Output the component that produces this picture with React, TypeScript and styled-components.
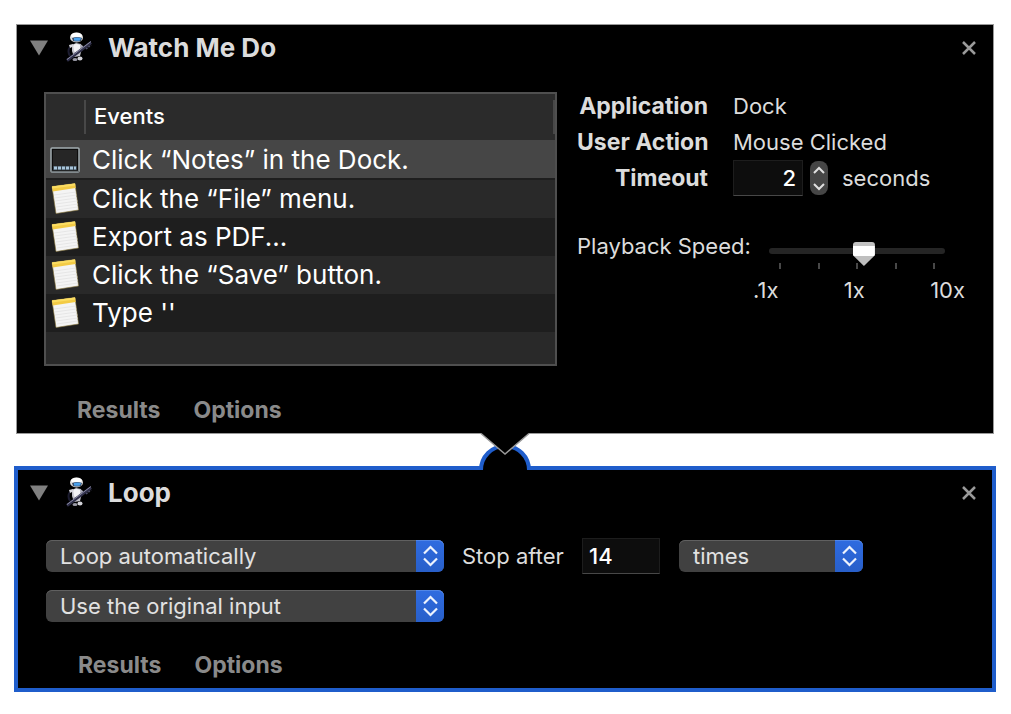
import React, { useState } from "react";
import styled, { createGlobalStyle } from "styled-components";

const GlobalStyle = createGlobalStyle`
  * { box-sizing: border-box; }
  body {
    margin: 0;
    background: #fff;
    font-family: Inter, "Liberation Sans", sans-serif;
    font-size: 22px;
    line-height: 28px;
    color: #dcdcdc;
  }
  button, input, select { font: inherit; color: inherit; }
`;

const Workflow = styled.main`
  padding: 24px 15px 22px 14px;
`;

const Panel = styled.section<{ $selected?: boolean }>`
  background: #000;
  margin: ${(p) => (p.$selected ? "0" : "0 2px")};
  border: ${(p) => (p.$selected ? "4px solid #1f5dcb" : "1px solid #999")};
`;

const Header = styled.header<{ $selected?: boolean }>`
  display: flex;
  align-items: center;
  height: 46px;
  padding: ${(p) => (p.$selected ? "0 16px 0 12px" : "0 17px 0 13px")};
`;

const IconButton = styled.button`
  display: flex;
  padding: 0;
  border: 0;
  background: none;
`;

const Title = styled.h2`
  flex: 1;
  margin: 0 0 0 14px;
  font-size: 26px;
  line-height: 32px;
  font-weight: 700;
`;

const Robot = styled.svg`
  display: block;
  margin-left: 16px;
`;

const Footer = styled.footer`
  display: flex;
  gap: 33px;
  height: 66px;
  padding: 29px 0 0 60px;
`;

const FooterButton = styled.button`
  height: 28px;
  padding: 0;
  border: 0;
  background: none;
  font-size: 23px;
  font-weight: 700;
  color: #8a8a8a;
`;

const RecorderBody = styled.div`
  display: flex;
  gap: 20px;
  padding: 21px 28px 1px 27px;
`;

const ListBox = styled.div`
  flex: 1;
  min-width: 0;
  min-height: 274px;
  border: 2px solid #4f4f4f;
  background: #292929;
`;

const EventTable = styled.table`
  width: 100%;
  border-collapse: collapse;
  table-layout: fixed;
  color: #fff;
`;

const HeadCell = styled.th<{ $icon?: boolean }>`
  width: ${(p) => (p.$icon ? "40px" : "auto")};
  height: 46px;
  padding: 0 0 2px 8px;
  text-align: left;
  font-weight: 500;
  background: linear-gradient(#484848, #484848) right 6px / 2px 34px no-repeat #2b2b2b;
  background-position: right 0 top 6px;
`;

const EventRow = styled.tr<{ $selected?: boolean }>`
  height: ${(p) => (p.$selected ? "40px" : "38px")};
  background: #292929;
  &:nth-child(odd) { background: #1e1e1e; }
  ${(p) => p.$selected && "&&:nth-child(odd) { background: linear-gradient(#464646 38px, #1e1e1e 38px); }"}
`;

const EventCell = styled.td<{ $icon?: boolean }>`
  padding: ${(p) => (p.$icon ? "0 0 0 4px" : "0 0 0 6px")};
  font-size: 26px;
  line-height: 38px;
  white-space: nowrap;
  overflow: hidden;
  svg { display: block; }
`;

const Details = styled.div`
  flex: none;
  width: 388px;
`;

const Facts = styled.div`
  display: grid;
  grid-template-columns: 131px 1fr;
  column-gap: 25px;
  row-gap: 8px;
  white-space: nowrap;
`;

const FactName = styled.label`
  height: 28px;
  text-align: right;
  font-size: 23px;
  font-weight: 700;
`;

const FactValue = styled.div`
  display: flex;
  align-items: center;
  height: 28px;
`;

const NumberBox = styled.input<{ $width: number; $align: string }>`
  flex: none;
  width: ${(p) => p.$width}px;
  height: 36px;
  padding: 0 6px;
  border: 1px solid #1d1d1d;
  border-bottom-color: #484848;
  border-radius: 0;
  background: #0d0d0d;
  color: #fff;
  font-weight: 500;
  text-align: ${(p) => p.$align};
`;

const Stepper = styled.div`
  flex: none;
  width: 18px;
  height: 34px;
  margin: 0 14px 0 7px;
  border-radius: 8px;
  background: #464646;
`;

const StepButton = styled.button`
  display: flex;
  align-items: center;
  justify-content: center;
  width: 18px;
  height: 17px;
  padding: 0;
  border: 0;
  background: none;
`;

const Speed = styled.div`
  display: grid;
  grid-template-columns: 176px 1fr;
  margin-top: 40px;
  white-space: nowrap;
`;

const SpeedScale = styled.div`
  padding-top: 7px;
`;

const Slider = styled.input`
  appearance: none;
  position: relative;
  display: block;
  width: 176px;
  height: 24px;
  margin: 0 20px 0 16px;
  background: none;
  &::-webkit-slider-runnable-track {
    height: 6px;
    border-radius: 3px;
    background: #252525;
  }
  &::-webkit-slider-thumb {
    appearance: none;
    width: 22px;
    height: 24px;
    margin-top: -6px;
    border-radius: 3px;
    background: linear-gradient(#c2c2c2 4px, #fff 4px, #fff 14px, #bfbfbf 14px);
    clip-path: polygon(0 0, 100% 0, 100% 55%, 50% 100%, 0 55%);
  }
`;

const Ticks = styled.div`
  display: flex;
  justify-content: space-between;
  margin: 0 30px 7px 26px;
`;

const Tick = styled.span`
  width: 2px;
  height: 6px;
  background: #484848;
`;

const SpeedLabels = styled.div`
  display: flex;
  justify-content: space-between;
`;

const Connector = styled.div`
  position: relative;
  height: 32px;
  svg {
    position: absolute;
    z-index: 1;
    top: -2px;
    left: 50%;
    transform: translateX(-50%);
  }
`;

const LoopBody = styled.div`
  display: flex;
  flex-direction: column;
  gap: 16px;
  padding: 22px 28px 0;
`;

const ControlRow = styled.div`
  display: flex;
  align-items: center;
  white-space: nowrap;
`;

const LoopRow = styled(ControlRow)`
  height: 36px;
`;

const StopLabel = styled.label`
  width: 120px;
  margin-left: 18px;
`;

const SelectWrap = styled.div<{ $width: number; $gap?: number }>`
  position: relative;
  flex: 0 1 ${(p) => p.$width}px;
  height: 32px;
  margin-left: ${(p) => p.$gap || 0}px;
`;

const Select = styled.select`
  appearance: none;
  width: 100%;
  height: 32px;
  padding: 0 40px 0 14px;
  border: 0;
  border-radius: 6px;
  background: #414141;
  box-shadow: inset 0 1px 0 #606060;
  color: #e2e2e2;
`;

const SelectArrows = styled.span`
  position: absolute;
  top: 0;
  right: 0;
  display: flex;
  align-items: center;
  justify-content: center;
  width: 28px;
  height: 32px;
  border-radius: 0 6px 6px 0;
  background: linear-gradient(#2f6be0, #285fc9);
  box-shadow: inset 0 1px 0 #5286e6;
  pointer-events: none;
`;

function AutomatorIcon() {
  return (
    <Robot width="28" height="32" viewBox="0 0 28 32" aria-hidden="true">
      <path d="M4 15 Q1 19 4 24" stroke="#1c1c30" strokeWidth="2" fill="none" />
      <path d="M6 13 L10 11 L15 12 L16 16 L14 24 L8 25 L6 19 Z" fill="#c4c4cc" />
      <path d="M7 13 Q10 11 14 13 L14 19 Q10 22 8 19 Z" fill="#f3f3f6" />
      <path d="M3 13 L7 12 L8 14 L4 16 Z" fill="#d6d6dc" />
      <path d="M14 12 L17 14 L17 18 L15 18 Z" fill="#aeaebb" />
      <ellipse cx="10.500" cy="5.500" rx="6.500" ry="5" fill="#dedede" />
      <ellipse cx="10.500" cy="3.500" rx="5.500" ry="2.800" fill="#fff" />
      <path d="M6 6 Q11 4 16 6 L15 9 Q11 10 7 9 Z" fill="#3a4e6c" />
      <path d="M8 6 Q11 5 15 6 L14 8.500 Q11 9 8 8.500 Z" fill="#4aa0ea" />
      <ellipse cx="9" cy="27.500" rx="2.500" ry="1.500" fill="#9c9ca8" />
      <ellipse cx="14" cy="26.500" rx="2.500" ry="2" fill="#d2d2d8" />
      <path d="M1 28.500 L25 10.500" stroke="#30304a" strokeWidth="3" />
      <path d="M1 27.500 L25 9.500" stroke="#8c8ca6" strokeWidth="1" />
      <path d="M20 17 L25 13" stroke="#4c4c66" strokeWidth="1.500" strokeDasharray="2 1" />
    </Robot>
  );
}

function NoteIcon() {
  return (
    <svg width="32" height="34" viewBox="0 0 32 34" aria-hidden="true">
      <path d="M2 4.500 L25 1.500 L28.500 28 L6 31.500 Z" fill="#f4f4f4" stroke="#8b783c" strokeWidth="0.600" />
      <path d="M2 4.500 L25 1.500 L25.700 6 L2.700 9.500 Z" fill="#f3cb45" />
      <path d="M2 4.500 L25 1.500 L25.300 3.500 L2.300 6.500 Z" fill="#fbdd62" />
      <path d="M4 13 L26 10 M4.500 16 L26.500 13 M5 19 L27 16 M5.500 22 L27.500 19 M6 25 L28 22 M6.500 28 L28 25" stroke="#e2e2e2" strokeWidth="0.800" />
    </svg>
  );
}

function DockIcon() {
  return (
    <svg width="32" height="28" viewBox="0 0 32 28" aria-hidden="true">
      <rect x="1" y="2" width="28" height="24" rx="1" fill="#0c0c0c" stroke="#a3adb1" strokeWidth="1.500" />
      <path d="M1.500 25.500 H29" stroke="#6b7275" strokeWidth="1.500" />
      <rect x="3" y="4" width="24" height="16" fill="#262626" />
      <rect x="3" y="20" width="24" height="4" fill="#384651" />
      <path d="M4 22 H26" stroke="#a9c6dc" strokeWidth="3" strokeDasharray="3 1" />
    </svg>
  );
}

function Chevrons() {
  return (
    <SelectArrows>
      <svg width="16" height="22" viewBox="0 0 16 22" aria-hidden="true">
        <path d="M2 8.500 L8.500 2 L15 8.500 M2 13.500 L8.500 20 L15 13.500" fill="none" stroke="#eef3fd" strokeWidth="2.200" />
      </svg>
    </SelectArrows>
  );
}

function PanelHeader({ title, selected }: { title: string; selected?: boolean }) {
  return (
    <Header $selected={selected}>
      <IconButton aria-label={`Collapse ${title}`}>
        <svg width="20" height="16" viewBox="0 0 20 16">
          <path d="M0 0.500 H18 L9 15.500 Z" fill="#808080" />
        </svg>
      </IconButton>
      <AutomatorIcon />
      <Title>{title}</Title>
      <IconButton aria-label={`Remove ${title}`}>
        <svg width="14" height="14" viewBox="0 0 14 14">
          <path d="M1 1 L13 13 M13 1 L1 13" stroke="#9a9a9a" strokeWidth="2.500" />
        </svg>
      </IconButton>
    </Header>
  );
}

function PanelFooter() {
  return (
    <Footer>
      <FooterButton>Results</FooterButton>
      <FooterButton>Options</FooterButton>
    </Footer>
  );
}

function Popup({ label, width, gap, options }: { label: string; width: number; gap?: number; options: string[] }) {
  return (
    <SelectWrap $width={width} $gap={gap}>
      <Select aria-label={label}>
        {options.map((o) => (
          <option key={o}>{o}</option>
        ))}
      </Select>
      <Chevrons />
    </SelectWrap>
  );
}

const events = [
  { icon: "dock", text: "Click “Notes” in the Dock." },
  { icon: "note", text: "Click the “File” menu." },
  { icon: "note", text: "Export as PDF..." },
  { icon: "note", text: "Click the “Save” button." },
  { icon: "note", text: "Type ''" },
];

export default function App() {
  const [timeout, setTimeoutValue] = useState(2);
  const [count, setCount] = useState("14");
  const [speed, setSpeed] = useState(109);

  return (
    <>
      <GlobalStyle />
      <Workflow>
        <Panel>
          <PanelHeader title="Watch Me Do" />
          <RecorderBody>
            <ListBox>
              <EventTable>
                <thead>
                  <tr>
                    <HeadCell $icon aria-label="Icon" />
                    <HeadCell>Events</HeadCell>
                  </tr>
                </thead>
                <tbody>
                  {events.map((e, i) => (
                    <EventRow key={e.text} $selected={i === 0}>
                      <EventCell $icon>{e.icon === "dock" ? <DockIcon /> : <NoteIcon />}</EventCell>
                      <EventCell>{e.text}</EventCell>
                    </EventRow>
                  ))}
                </tbody>
              </EventTable>
            </ListBox>
            <Details>
              <Facts>
                <FactName as="span">Application</FactName>
                <FactValue>Dock</FactValue>
                <FactName as="span">User Action</FactName>
                <FactValue>Mouse Clicked</FactValue>
                <FactName htmlFor="timeout">Timeout</FactName>
                <FactValue>
                  <NumberBox
                    id="timeout"
                    $width={70}
                    $align="right"
                    value={timeout}
                    onChange={(e) => setTimeoutValue(Number(e.target.value) || 0)}
                  />
                  <Stepper>
                    <StepButton aria-label="Increase" onClick={() => setTimeoutValue(timeout + 1)}>
                      <svg width="12" height="8" viewBox="0 0 12 8">
                        <path d="M1 7 L6 2 L11 7" fill="none" stroke="#e0e0e0" strokeWidth="2" />
                      </svg>
                    </StepButton>
                    <StepButton aria-label="Decrease" onClick={() => setTimeoutValue(Math.max(0, timeout - 1))}>
                      <svg width="12" height="8" viewBox="0 0 12 8">
                        <path d="M1 1 L6 6 L11 1" fill="none" stroke="#e0e0e0" strokeWidth="2" />
                      </svg>
                    </StepButton>
                  </Stepper>
                  seconds
                </FactValue>
              </Facts>
              <Speed>
                <label htmlFor="speed">Playback Speed:</label>
                <SpeedScale>
                  <Slider
                    id="speed"
                    type="range"
                    min={0}
                    max={200}
                    value={speed}
                    onChange={(e) => setSpeed(Number(e.target.value))}
                  />
                  <Ticks>
                    {[0, 1, 2, 3, 4].map((t) => (
                      <Tick key={t} />
                    ))}
                  </Ticks>
                  <SpeedLabels>
                    <span>.1x</span>
                    <span>1x</span>
                    <span>10x</span>
                  </SpeedLabels>
                </SpeedScale>
              </Speed>
            </Details>
          </RecorderBody>
          <PanelFooter />
        </Panel>

        <Connector>
          <svg width="56" height="38" viewBox="0 0 56 38" aria-hidden="true">
            <path d="M4 38 A24 24 0 0 1 52 38" fill="#000" stroke="#1f5dcb" strokeWidth="4" />
            <path d="M4 0 V1.500 L28 22 L52 1.500 V0 Z" fill="#000" />
            <path d="M4 1.500 L28 22 L52 1.500" fill="none" stroke="#999" strokeWidth="1.500" />
          </svg>
        </Connector>

        <Panel $selected>
          <PanelHeader title="Loop" selected />
          <LoopBody>
            <LoopRow>
              <Popup label="Loop mode" width={398} options={["Loop automatically", "Ask to continue"]} />
              <StopLabel htmlFor="count">Stop after</StopLabel>
              <NumberBox
                id="count"
                $width={78}
                $align="left"
                value={count}
                onChange={(e) => setCount(e.target.value)}
              />
              <Popup label="Stop unit" width={184} gap={19} options={["times", "minutes"]} />
            </LoopRow>
            <ControlRow>
              <Popup label="Loop input" width={398} options={["Use the original input", "Use the current results as input"]} />
            </ControlRow>
          </LoopBody>
          <PanelFooter />
        </Panel>
      </Workflow>
    </>
  );
}
